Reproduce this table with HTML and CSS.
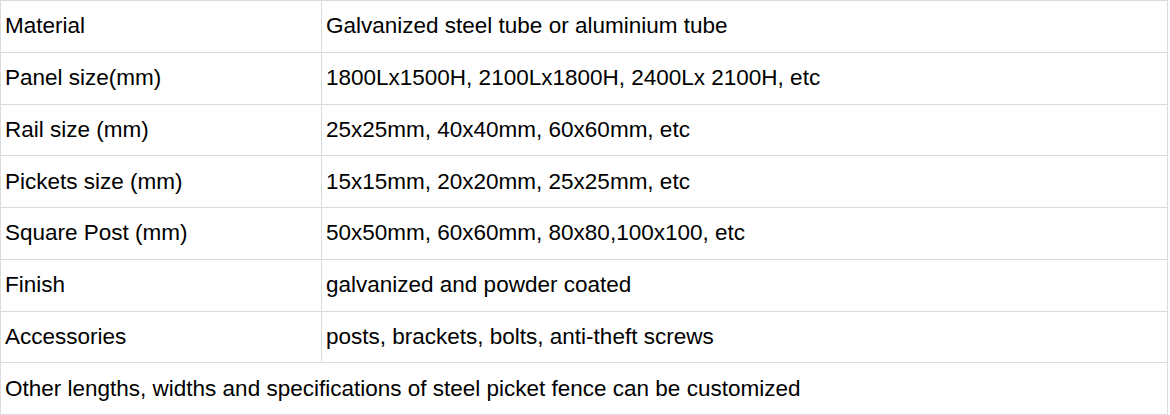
FILE: index.html
```html
<!DOCTYPE html>
<html>
<head>
<meta charset="utf-8">
<link rel="stylesheet" href="styles.css">
</head>
<body>
<table class="spec">
  <colgroup><col class="c1"><col class="c2"></colgroup>
  <tbody>
    <tr><td>Material</td><td>Galvanized steel tube or aluminium tube</td></tr>
    <tr><td>Panel size(mm)</td><td>1800Lx1500H, 2100Lx1800H, 2400Lx 2100H, etc</td></tr>
    <tr><td>Rail size (mm)</td><td>25x25mm, 40x40mm, 60x60mm, etc</td></tr>
    <tr><td>Pickets size (mm)</td><td>15x15mm, 20x20mm, 25x25mm, etc</td></tr>
    <tr><td>Square Post (mm)</td><td>50x50mm, 60x60mm, 80x80,100x100, etc</td></tr>
    <tr><td>Finish</td><td>galvanized and powder coated</td></tr>
    <tr><td>Accessories</td><td>posts, brackets, bolts, anti-theft screws</td></tr>
    <tr><td colspan="2">Other lengths, widths and specifications of steel picket fence can be customized</td></tr>
  </tbody>
</table>
</body>
</html>
```
FILE: styles.css
```css
html, body {
  margin: 0;
  padding: 0;
  background: #fff;
}
.spec {
  border-collapse: collapse;
  width: 1168px;
  table-layout: fixed;
  font-family: "Liberation Sans", Arial, sans-serif;
  font-size: 22.5px;
  color: #000;
}
.c1 { width: 321px; }
.spec td {
  border: 1px solid #dcdcdc;
  padding: 0 4px;
  height: 50.75px;
  line-height: 24px;
  vertical-align: middle;
  white-space: nowrap;
}
```
